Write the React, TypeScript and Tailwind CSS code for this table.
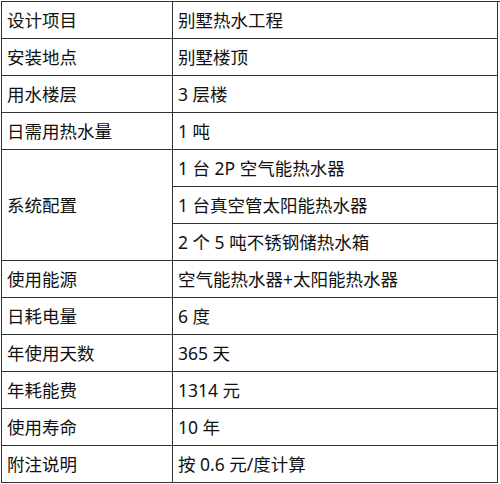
import { Fragment } from 'react';

const rows: [string, string[]][] = [
  ['设计项目', ['别墅热水工程']],
  ['安装地点', ['别墅楼顶']],
  ['用水楼层', ['3 层楼']],
  ['日需用热水量', ['1 吨']],
  ['系统配置', ['1 台 2P 空气能热水器', '1 台真空管太阳能热水器', '2 个 5 吨不锈钢储热水箱']],
  ['使用能源', ['空气能热水器+太阳能热水器']],
  ['日耗电量', ['6 度']],
  ['年使用天数', ['365 天']],
  ['年耗能费', ['1314 元']],
  ['使用寿命', ['10 年']],
  ['附注说明', ['按 0.6 元/度计算']],
];

const App = () => {
  return (
    <div className="w-[500px] h-[484px] bg-white pt-[1px] pl-[1px]">
      <div
        className="grid grid-cols-[171px_325px] border-l border-t border-[#333] text-[17.5px] text-[#111]"
        style={{ fontFamily: '"Noto Sans", "Noto Sans CJK SC", sans-serif' }}
      >
        {rows.map(([label, values]) => (
          <Fragment key={label}>
            <div
              className={`flex items-center pl-[5px] border-r border-b border-[#333] ${
                values.length === 3 ? 'row-span-3' : 'h-[37px]'
              }`}
            >
              {label}
            </div>
            {values.map((v) => (
              <div key={v} className="flex items-center h-[37px] pl-[5px] border-r border-b border-[#333]">
                {v}
              </div>
            ))}
          </Fragment>
        ))}
      </div>
    </div>
  );
};

export default App;
